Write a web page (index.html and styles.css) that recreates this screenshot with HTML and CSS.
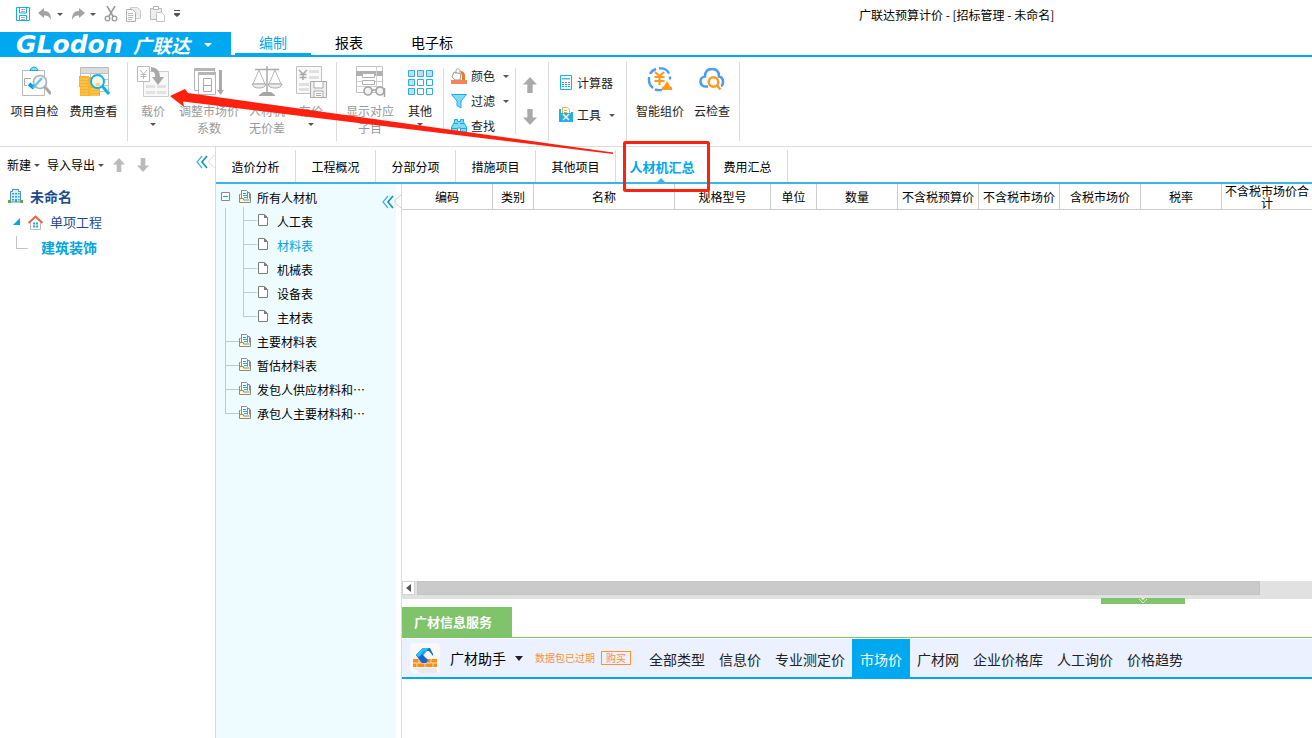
FILE: index.html
```html
<!DOCTYPE html>
<html lang="zh-CN">
<head>
<meta charset="utf-8">
<title>广联达预算计价</title>
<link rel="stylesheet" href="styles.css">
</head>
<body>
<svg class="defs" width="0" height="0" aria-hidden="true">
  <symbol id="docs" viewBox="0 0 12 13"><path d="M.5 12.500v-8h2v4h9v4z" fill="#fff8c8"/><path d="M2.500 8.500v-8h6v8z" fill="#fff"/><path d="M8.500 2.500h2v6h-2z" fill="#fff"/><path d="M2.500 8.500v-8h5l1 1v7M8.500 2.500h2v6M.5 4.500h1M.5 4.500v8h11v-9M.5 8.500h4v1.500h6" fill="none" stroke="#8a8a8a"/><path d="M4 3.500h3M4 5.500h4M5 7.500h3" stroke="#2fa8d8"/></symbol>
  <symbol id="page" viewBox="0 0 11 13"><path d="M.5.5h6l3 3v8H.5z" fill="#fff" stroke="#7c7c7c"/><path d="M6 0v4h4z" fill="#7c7c7c"/></symbol>
  <symbol id="up" viewBox="0 0 13 15"><path d="M6.500 0 13 7H9v8H4V7H0z" fill="currentColor"/></symbol>
  <symbol id="down" viewBox="0 0 13 15"><path d="M6.500 15 13 8H9V0H4v8H0z" fill="currentColor"/></symbol>
  <symbol id="chev" viewBox="0 0 12 14"><path d="M6 1 1 7l5 6" fill="none" stroke="#3db3d8" stroke-width="1.200"/><path d="M11 1 6 7l5 6" fill="none" stroke="#0a93bb" stroke-width="1.600"/></symbol>
</svg>

<header class="titlebar">
  <div class="quick">
    <button aria-label="保存"><svg width="14" height="14" viewBox="0 0 14 14"><path d="M.5.5h13v13H.5z" fill="#fff" stroke="#12b0e4"/><path d="M3.500 1v5h7V1M3.500 13V8.500h7V13" fill="none" stroke="#12b0e4"/><path d="M5 2.500h4M5 4.500h4M5 10.500h4M5 12.500h4" stroke="#aaa"/></svg></button>
    <button aria-label="撤销"><svg width="14" height="13" viewBox="0 0 14 13"><path d="M0 5 6 0v3c5 0 7 3 7 9C11 8.500 10 7.500 6 7.500V10z" fill="#a3a3a3"/></svg><i class="caret"></i></button>
    <button aria-label="重做"><svg width="14" height="13" viewBox="0 0 14 13"><path d="M14 5 8 0v3C3 3 1 6 1 12 3 8.500 4 7.500 8 7.500V10z" fill="#a3a3a3"/></svg><i class="caret"></i></button>
    <button aria-label="剪切"><svg width="14" height="16" viewBox="0 0 14 16"><path d="m3 0 6.500 11M11 0 4.500 11" stroke="#999" stroke-width="1.500" fill="none"/><circle cx="3.500" cy="12.500" r="2.300" fill="none" stroke="#999" stroke-width="1.300"/><circle cx="10.500" cy="12.500" r="2.300" fill="none" stroke="#999" stroke-width="1.300"/></svg></button>
    <button aria-label="复制"><svg width="16" height="15" viewBox="0 0 16 15"><path d="M4.500 2V.5h7l3 3v8H10" fill="#eee" stroke="#ccc"/><path d="M.5 2.500h6l3 3v9h-9z" fill="#fff" stroke="#b0b0b0"/><path d="M2 6.500h5M2 8.500h5M2 10.500h5M2 12.500h4" stroke="#bbb"/></svg></button>
    <button aria-label="粘贴"><svg width="16" height="16" viewBox="0 0 16 16"><path d="M.5 2.500h11v11H.5z" fill="#eee" stroke="#bbb"/><path d="M3.500.5h5v3h-5z" fill="#fff" stroke="#b0b0b0"/><path d="M6.500 6.500h5l3 3v6h-8z" fill="#fff" stroke="#c4c4c4"/></svg></button>
    <button aria-label="自定义"><svg width="6" height="8" viewBox="0 0 6 8"><path d="M0 0h6v1H0zM0 3h6v1.500L3 7 0 4.500z" fill="#555"/></svg></button>
  </div>
  <h1 class="title">广联达预算计价 - [招标管理 - 未命名]</h1>
</header>

<nav class="menubar">
  <button class="brand"><span class="word">GLodon</span><span class="cn">广联达</span><i class="caret light"></i></button>
  <button class="menu on">编制</button>
  <button class="menu">报表</button>
  <button class="menu">电子标</button>
</nav>

<section class="ribbon">
  <div class="group g1">
    <button class="tool"><svg width="32" height="32" viewBox="0 0 32 32"><path d="M3.500 4.500h22v25h-22z" fill="#fff" stroke="#bbb"/><path d="M11 4.500q1-3.500 4-3.500t4 3.500z" fill="#8edcf5" stroke="#12a9dc"/><path d="M12 12.500H5.500v7H8" fill="none" stroke="#aaa"/><circle cx="21" cy="16" r="6.500" fill="#f6fbfd" stroke="#b0b0b0" stroke-width="1.700"/><path d="m26 21 6 7" stroke="#a6a6a6" stroke-width="3"/><path d="m10 18 5 4" stroke="#05a0df" stroke-width="4"/><path d="m14 22 9-10" stroke="#56c3ec" stroke-width="2"/></svg>项目自检</button>
    <button class="tool"><svg width="32" height="32" viewBox="0 0 32 32"><path d="M2.500 1.500h28v24h-28z" fill="#fff" stroke="#bbb"/><path d="M3 2h27v5H3z" fill="#dcdcdc"/><path d="M3 7.500h27M3 13.500h27M3 19.500h27M12.500 8v17M21.500 8v17" stroke="#c0c0c0"/><path d="M1 10h10v20H2v-9H1zM11 11h11v19H11z" fill="#fbb32c"/><path d="M2 13h8M2 16h8M2 19h8M3 22h7M3 25h7M3 28h7M12 26h9M12 29h9M12 23h9" stroke="#ffcf68"/><circle cx="19.500" cy="15.500" r="6.500" fill="#fff7e2" stroke="#09b4ef" stroke-width="2"/><path d="M18 17h4v3h-4z" fill="#fcd48c"/><path d="m24 20 7 8" stroke="#09b4ef" stroke-width="3"/></svg>费用查看</button>
  </div>
  <div class="group g2">
    <button class="tool off w50"><svg width="32" height="32" viewBox="0 0 32 32"><path d="M6.500 5.500h25v25h-25z" fill="#f8f8f8" stroke="#ccc"/><path d="M9 19h9v3H9zM20 19h9v3h-9zM9 25h9v3H9zM20 25h9v3h-9z" fill="#e2e2e2"/><path d="M.5.500h12v15H.5z" fill="#fff" stroke="#bbb"/><path d="m3 4 3.500 4L10 4M6.500 8v5M3.500 8.500h6M3.500 10.500h6" fill="none" stroke="#bbb"/><path d="M14 1q9 1 9 10h4l-6 8-6-8h3q1-5-4-6z" fill="#a8a8a8"/></svg>载价<i class="caret"></i></button>
    <button class="tool off w62"><svg width="32" height="32" viewBox="0 0 32 32"><path d="M1.500 2.500h20v22h-20z" fill="#fff" stroke="#b6b6b6"/><path d="M1 2h21v3H1z" fill="#b6b6b6"/><path d="M5.500 6.500h17v22h-17z" fill="#fff" stroke="#b6b6b6"/><path d="M5 6h18v3H5z" fill="#b6b6b6"/><path d="M10.500 12.500h8v13h-8zM10 19.500h9" fill="#fff" stroke="#aaa"/><path d="M26 4h3v20h2l-3.500 5L24 24h2z" fill="#aaa"/></svg>调整市场价<br>系数</button>
    <button class="tool off w54"><svg width="32" height="32" viewBox="0 0 32 32"><path d="M4 3.500h24M16 0v27" stroke="#aaa" stroke-width="1.500"/><path d="M8 4 2 18h12zM24 4l-6 14h12z" fill="#fff" stroke="#b6b6b6"/><path d="M1 18h14q-1 4-7 4t-7-4zM17 18h14q-1 4-7 4t-7-4z" fill="#eee" stroke="#aaa"/><path d="M8 30v-1l4-3h8l4 3v1z" fill="#a6a6a6"/></svg>人材机<br>无价差</button>
    <button class="tool off w34"><svg width="32" height="32" viewBox="0 0 32 32"><path d="M1.500.500h25v27h-25z" fill="#fafafa" stroke="#c0c0c0"/><path d="M14 4h10v3H14zM14 10h10v3H14zM4 17h10v3H4zM4 22h10v3H4z" fill="#e0e0e0"/><path d="m4 4 4 4 4-4M8 8v6M4.500 8.500h7M4.500 11.500h7" fill="none" stroke="#aaa" stroke-width="1.500"/><path d="M15.500 15.500h16v16h-16z" fill="#eee" stroke="#aaa"/><path d="M19 16v6h9v-6M19 31v-6h9v6M21 27.500h5M21 29.500h5" fill="#fff" stroke="#aaa"/></svg>存价<i class="caret"></i></button>
  </div>
  <div class="group g3">
    <button class="tool off w66"><svg width="32" height="32" viewBox="0 0 32 32"><path d="M2.500.500h26v26h-26z" fill="#fff" stroke="#c0c0c0"/><path d="M2 5h27v5H2z" fill="#b0b0b0"/><path d="M3 15.500h25M3 20.500h25M22.500 0v26" stroke="#d0d0d0"/><path d="M8.500 7.500h12v4h-12zM8.500 14.500h12v4h-12z" fill="#fff" stroke="#b0b0b0"/><circle cx="14" cy="25" r="4" fill="#f2f2f2" stroke="#a4a4a4" stroke-width="1.700"/><circle cx="26" cy="25" r="4" fill="#f2f2f2" stroke="#a4a4a4" stroke-width="1.700"/><path d="M18 24h4M30.500 22v9" stroke="#a4a4a4" stroke-width="1.500"/></svg>显示对应<br>子目</button>
    <button class="tool w34"><svg width="32" height="32" viewBox="0 0 32 32"><g stroke="#27b0e4"><path fill="#c2ddef" d="M4.500 4.500h6v6h-6zM13.500 4.500h6v6h-6zM22.500 4.500h6v6h-6zM4.500 13.500h6v6h-6zM4.500 22.500h6v6h-6z"/><path fill="#fff" d="M13.500 13.500h6v6h-6zM22.500 13.500h6v6h-6zM13.500 22.500h6v6h-6zM22.500 22.500h6v6h-6z"/></g></svg>其他<i class="caret"></i></button>
  </div>
  <div class="group rows g4">
    <button class="row"><svg width="16" height="16" viewBox="0 0 16 16"><path d="m3 4 7 2-1 6H4L1 9z" fill="#fff" stroke="#999"/><path d="M5 6V2q2-3 4 0v4" fill="none" stroke="#aaa"/><path d="M9 3q5 0 5 5v4h-3V7z" fill="#e67c24"/><path d="M0 12h16v4H0z" fill="#f4845e"/></svg>颜色<i class="caret"></i></button>
    <button class="row"><svg width="16" height="16" viewBox="0 0 16 16"><path d="M.5 1.500h15L10 8v7l-4-2.500V8z" fill="#85d8f4" stroke="#1bb0e2"/></svg>过滤<i class="caret"></i></button>
    <button class="row"><svg width="16" height="16" viewBox="0 0 16 16"><path d="M3.500 4V1.500h3v2h3v-2h3V4l3 5v5h-6v-4h-3v4h-6V9z" fill="#85d8f4" stroke="#12aee0"/><path d="M3 5.500h4M9 5.500h4M1 10.500h5M10 10.500h5" stroke="#12aee0"/></svg>查找</button>
  </div>
  <div class="group arrows">
    <button aria-label="上移"><svg width="14" height="16"><use href="#up"/></svg></button>
    <button aria-label="下移"><svg width="14" height="16"><use href="#down"/></svg></button>
  </div>
  <div class="group rows g5">
    <button class="row"><svg width="14" height="16" viewBox="0 0 14 16"><path d="M1.500.500h11v14h-11z" fill="#fff" stroke="#16b0e4"/><path d="M3 3h8v1.500H3z" fill="#45bfe5"/><path d="M3 7.500h2M6 7.500h2M3 9.500h2M6 9.500h2M9 9.500h2M3 11.500h2M6 11.500h2M9 11.500h2" stroke="#16a8da"/><path d="M9 7.500h2" stroke="#f44"/></svg>计算器</button>
    <button class="row"><svg width="14" height="16" viewBox="0 0 14 16"><path d="M3.500.500h5l2 2V8h-7z" fill="#fff" stroke="#e6b84c"/><path d="M5 3.500h3M5 5.500h3" stroke="#f4a934"/><path d="M0 2h2v4h10V5h2v10H0z" fill="#23aee6"/><path d="m4 7 6 6M10 7l-6 6" stroke="#fff" stroke-width="1.500"/></svg>工具<i class="caret"></i></button>
  </div>
  <div class="group g6">
    <button class="tool w58"><svg width="26" height="32" viewBox="0 0 26 32"><path d="M9 3a10.500 10.500 0 0 0-6 5M2 11v3q0 5 4 8M12 2.500q7-1 10 5M23 10.500v3M8 23.500q3 1 7 .5" fill="none" stroke="#4a9cf5" stroke-width="2.400"/><path d="m8 6 4.500 4L17 6M12.500 9v10M7.500 11h10M7.500 15h10" stroke="#ff9a1f" stroke-width="2.200" fill="none"/><path d="M15 24q-1-3 2-4l3-5 3 5q3 1 2 4z" fill="#ff9a1f"/></svg>智能组价</button>
    <button class="tool w46"><svg width="26" height="32" viewBox="0 0 26 32"><path d="M9 20.500H7A5 5 0 0 1 6 10.500Q6 3 13 3t7 7.500q4 1 4 5t-2 4.500" fill="none" stroke="#4a9cf5" stroke-width="2.600"/><circle cx="14.500" cy="16" r="4.800" fill="#fff" stroke="#ff9a1f" stroke-width="2.500"/><path d="m18 19.500 3.500 4" stroke="#ff9a1f" stroke-width="2.600"/></svg>云检查</button>
  </div>
</section>

<main class="work">
  <aside class="project">
    <div class="bar">
      <button>新建<i class="caret"></i></button>
      <button>导入导出<i class="caret"></i></button>
      <button class="mv" aria-label="上移"><svg width="12" height="14"><use href="#up"/></svg></button>
      <button class="mv" aria-label="下移"><svg width="12" height="14"><use href="#down"/></svg></button>
      <button class="fold" aria-label="收起"><svg width="12" height="14"><use href="#chev"/></svg><svg width="7" height="16" viewBox="0 0 7 16"><path d="M7 1 1 6v3l6 5" fill="none" stroke="#ddd"/></svg></button>
    </div>
    <ul class="ptree">
      <li><button class="p1"><svg width="15" height="14" viewBox="0 0 15 14"><path d="M2.500 13V2.500h2v-2h6v2h2V13z" fill="#d5effa" stroke="#5b8fae"/><path d="M4 4h2v1.500H4zM7 4h2v1.500H7zM10 4h1.500v1.500H10zM4 7h2v1.500H4zM7 7h2v1.500H7zM10 7h1.500v1.500H10zM4 10h2v1.500H4zM7 10h2v3H7zM10 10h1.500v1.500H10z" fill="#2ba4de"/><path d="M0 11h3v3H0zM12 11h3v3h-3z" fill="#54ad4a"/></svg>未命名</button></li>
      <li><button class="p2"><svg width="8" height="8" viewBox="0 0 8 8"><path d="M7 0v7H0z" fill="#0ba4e8"/></svg><svg width="15" height="15" viewBox="0 0 15 15"><path d="M2.500 7v7.500h10V7L7.500 2z" fill="#fff" stroke="#bbb"/><path d="m.5 8 7-6.500 7 6.500" fill="none" stroke="#ef6548" stroke-width="2"/><path d="M5 7.500h2v2H5zM8 7.500h2v2H8zM5 10.500h2v2H5zM8 10.500h2v2H8z" fill="#25a7df"/></svg>单项工程</button></li>
      <li><button class="p3">建筑装饰</button></li>
    </ul>
  </aside>

  <section class="content">
    <nav class="tabs">
      <button>造价分析</button><button>工程概况</button><button>分部分项</button><button>措施项目</button><button>其他项目</button><button class="on">人材机汇总</button><button>费用汇总</button>
    </nav>
    <div class="split">
      <aside class="kinds">
        <button class="fold" aria-label="收起"><svg width="12" height="14"><use href="#chev"/></svg><svg width="7" height="16" viewBox="0 0 7 16"><path d="M7 1 1 6v3l6 5" fill="none" stroke="#ccc"/></svg></button>
        <ul class="tree">
          <li class="root"><button><svg class="exp" width="9" height="9" viewBox="0 0 9 9"><path d="M.5.500h8v8h-8z" fill="#fff" stroke="#888"/><path d="M2 4.500h5" stroke="#1aa5da"/></svg><svg width="12" height="13"><use href="#docs"/></svg>所有人材机</button>
            <ul>
              <li><button><svg width="11" height="13"><use href="#page"/></svg>人工表</button></li>
              <li><button class="on"><svg width="11" height="13"><use href="#page"/></svg>材料表</button></li>
              <li><button><svg width="11" height="13"><use href="#page"/></svg>机械表</button></li>
              <li><button><svg width="11" height="13"><use href="#page"/></svg>设备表</button></li>
              <li><button><svg width="11" height="13"><use href="#page"/></svg>主材表</button></li>
            </ul>
          </li>
          <li><button><svg width="12" height="13"><use href="#docs"/></svg>主要材料表</button></li>
          <li><button><svg width="12" height="13"><use href="#docs"/></svg>暂估材料表</button></li>
          <li><button><svg width="12" height="13"><use href="#docs"/></svg>发包人供应材料和…</button></li>
          <li><button><svg width="12" height="13"><use href="#docs"/></svg>承包人主要材料和…</button></li>
        </ul>
      </aside>
      <div class="sheet">
        <div class="gridwrap">
          <table>
            <colgroup><col class="c91"><col class="c41"><col class="c141"><col class="c96"><col class="c46"><col class="c81"><col class="c81"><col class="c81"><col class="c81"><col class="c81"><col></colgroup>
            <thead><tr><th>编码</th><th>类别</th><th>名称</th><th>规格型号</th><th>单位</th><th>数量</th><th>不含税预算价</th><th>不含税市场价</th><th>含税市场价</th><th>税率</th><th>不含税市场价合计</th></tr></thead>
          </table>
        </div>
        <div class="scroll"><button aria-label="向左滚动"><svg width="5" height="8" viewBox="0 0 5 8"><path d="M5 0v8L0 4z" fill="#555"/></svg></button><div class="thumb"></div>
          <button class="grip" aria-label="收起面板"><svg width="10" height="6" viewBox="0 0 10 6"><path d="M3 0h4L5 2z" fill="#fff"/><path d="m1 1 4 4 4-4" fill="none" stroke="#d6f2cc"/></svg></button>
        </div>
        <section class="service">
          <div class="shead"><button>广材信息服务</button></div>
          <nav class="sbar">
            <svg class="slogo" width="30" height="30" viewBox="0 0 30 30"><rect width="30" height="30" rx="4" fill="#f8f8fa"/><path d="M4 25h23v5H10z" fill="#e8eaf0"/><path d="M3 16h24v8H3z" fill="#ff8c1a"/><path d="M3 20h24M9 16v4M21 16v4M7 20v4M15 20v4M23 20v4" stroke="#ffe0b8"/><path d="M6 12 13 5h7l-4 4-3 4 5 4-2 3h-4z" fill="#22aaf4"/><path d="m12 11 3-3h4l4 5v-2l-3-6h-7l-7 7 6 8h4l2-3z" fill="#1268d8"/><path d="m6 12 7-7h6l-3 3h-2l-3 4-2 2z" fill="#28c0f8"/></svg>
            <button class="helper">广材助手<i class="caret big"></i></button>
            <span class="expired">数据包已过期</span><button class="buy">购买</button>
            <div class="links"><button>全部类型</button><button>信息价</button><button>专业测定价</button><button class="on">市场价</button><button>广材网</button><button>企业价格库</button><button>人工询价</button><button>价格趋势</button></div>
          </nav>
          <div class="sbody"></div>
        </section>
      </div>
    </div>
  </section>
</main>

<svg class="mark" width="560" height="130" viewBox="160 80 560 130" aria-hidden="true"><path d="M170 96 185 89 188 93 613 152.500V154L183 101.500 184 107z" fill="#ff2010"/><rect x="624.500" y="142.500" width="84" height="48" rx="1" fill="none" stroke="#ff2010" stroke-width="3"/></svg>
</body>
</html>
```
FILE: styles.css
```css
* { box-sizing: border-box; }
body {
  margin: 0;
  position: relative;
  display: flex;
  flex-direction: column;
  height: 100vh;
  overflow: hidden;
  background: #fff;
  color: #000;
  font: 12px/16px "Noto Sans CJK SC", sans-serif;
}
button {
  margin: 0;
  padding: 0;
  border: 0;
  background: none;
  color: inherit;
  font: inherit;
  white-space: nowrap;
}
svg { display: block; flex: none; }
ul { list-style: none; margin: 0; padding: 0; }
.defs { position: absolute; }
.caret {
  flex: none;
  border: 3px solid transparent;
  border-top-color: #555;
  border-bottom: 0;
}
.caret.light { border-width: 4px 4px 0; border-top-color: #fff; }
.caret.big { border-width: 5px 5px 0; border-top-color: #222; }

.titlebar { display: flex; align-items: center; height: 32px; flex: none; padding-bottom: 2px; }
.quick { display: flex; align-items: center; width: 859px; height: 26px; padding: 0 0 2px 16px; gap: 8px; }
.quick button { display: flex; align-items: center; gap: 5px; }
.title { margin: 0; font-size: 12px; font-weight: 400; line-height: 16px; }

.menubar { display: flex; flex: none; height: 25px; border-bottom: 2px solid #00a8f0; }
.brand {
  display: flex;
  align-items: center;
  width: 231px;
  height: 25px;
  margin-right: 4px;
  padding-left: 16px;
  background: #00a8f0;
  color: #fff;
}
.word { width: 117px; text-align: left; font: italic bold 25px/24px "DejaVu Sans", sans-serif; }
.cn { margin-right: 14px; font-size: 19px; font-weight: 700; font-style: italic; line-height: 24px; }
.menu { width: 76px; height: 23px; padding-bottom: 1px; border-bottom: 2px solid transparent; font-size: 14px; line-height: 20px; }
.menu:last-child { width: 90px; }
.menu.on { color: #00a8f0; border-bottom-color: #00a8f0; }

.ribbon { display: flex; flex: none; height: 90px; padding-top: 5px; border-bottom: 1px solid #dcdcdc; color: #222; }
.group { display: flex; flex: none; height: 79px; padding-top: 4px; border-right: 1px solid #dcdcdc; }
.g1 { width: 128px; padding-left: 5px; }
.g2 { width: 209px; }
.g3 { width: 106px; }
.g3, .g4 { border-color: transparent; }
.g4, .arrows { margin-top: 6px; height: 66px; padding-top: 0; }
.tool { display: flex; flex-direction: column; align-items: center; width: 59px; height: 72px; line-height: 17px; }
.tool svg { height: 32px; margin-bottom: 4px; }
.tool .caret { margin-top: 4px; }
.off { color: #999; }
.w34 { width: 34px; }
.w46 { width: 46px; }
.w50 { width: 50px; }
.w54 { width: 54px; }
.w58 { width: 58px; }
.w62 { width: 62px; }
.w66 { width: 66px; }
.rows { flex-direction: column; }
.row { display: flex; align-items: center; }
.g4 { width: 72px; padding-left: 7px; gap: 9px; border-left: 1px solid #dcdcdc; }
.g4 .row { gap: 4px; }
.g4 .row .caret { margin-left: 4px; }
.arrows { width: 33px; padding-right: 4px; flex-direction: column; align-items: center; justify-content: center; gap: 16px; color: #aaa; border-left: 1px solid #dcdcdc; border-right-color: transparent; }
.g5 { width: 79px; padding: 13px 0 0 10px; gap: 16px; border-left: 1px solid #dcdcdc; }
.g5 .row { gap: 4px; }
.g5 .row .caret { margin-left: 4px; }
.g6 { width: 113px; padding-left: 4px; }

.work { display: flex; flex: 1; min-height: 0; }
.project { width: 216px; flex: none; border-right: 1px solid #dcdcdc; }
.bar { display: flex; align-items: center; height: 36px; padding-left: 7px; gap: 7px; }
.bar button { display: flex; align-items: center; gap: 3px; }
.bar .mv { color: #bbb; margin-left: 2px; margin-right: 3px; }
.bar .fold { margin-left: auto; gap: 0; height: 30px; align-self: flex-start; }
.ptree { padding-top: 1px; color: #1d4b8b; }
.ptree button { display: flex; align-items: center; height: 24px; }
.p1 { padding-left: 8px; gap: 7px; font-size: 14px; font-weight: 700; }
.ptree .p2 { padding-left: 13px; gap: 7px; height: 28px; font-size: 13px; }
.ptree .p3 { position: relative; height: 22px; padding-left: 41px; font-size: 14px; font-weight: 700; color: #00a5dc; }
.p3::before {
  content: "";
  position: absolute;
  left: 16px;
  top: 0;
  width: 11px;
  height: 12px;
  border: 1px solid #c4c4c4;
  border-width: 0 0 1px 1px;
}

.content { display: flex; flex-direction: column; flex: 1; min-width: 0; }
.tabs { display: flex; flex: none; height: 37px; padding-top: 3px; border-bottom: 2px solid #3cb4e4; }
.tabs button { width: 80px; padding-top: 2px; border-right: 1px solid #dcdcdc; }
.tabs .on { position: relative; width: 92px; border: 0; color: #00a8f0; font-size: 13px; font-weight: 700; }
.tabs .on::after {
  content: "";
  position: absolute;
  left: 41px;
  bottom: 0;
  border: 4px solid transparent;
  border-top: 0;
  border-bottom-color: #3cb4e4;
}
.split { display: flex; flex: 1; min-height: 0; }
.kinds { position: relative; flex: none; width: 186px; padding-top: 2px; border-right: 1px solid #dcdcdc; background: linear-gradient(90deg, #effcff 180px, #fff 180px); }
.kinds .fold { position: absolute; right: 0; top: 10px; display: flex; align-items: center; }
.tree button { display: flex; align-items: center; height: 24px; gap: 6px; }
.tree > li { position: relative; padding-left: 23px; }
.tree .root { padding-left: 5px; }
.tree .exp { margin: -3px 3px 0 0; }
.root > button > svg:nth-child(2) { margin-top: -4px; }
.tree li:not(.root) > button > svg { margin-top: -4px; }
.tree > li:not(.root)::before {
  content: "";
  position: absolute;
  left: 9px;
  bottom: 12px;
  width: 13px;
  height: 24px;
  border: 1px solid #c4cacc;
  border-width: 0 0 1px 1px;
}
.tree > .root::before {
  content: "";
  position: absolute;
  left: 9px;
  top: 22px;
  bottom: 0;
  border-left: 1px solid #c4cacc;
}
.root ul { padding-left: 37px; }
.root ul li { position: relative; }
.root ul button { gap: 8px; }
.root ul li::before {
  content: "";
  position: absolute;
  left: -15px;
  bottom: 13px;
  width: 13px;
  height: 24px;
  border: 1px solid #c4cacc;
  border-width: 0 0 1px 1px;
}
.root ul li:first-child::before { height: 13px; }
.tree .on { color: #00a5dc; }

.sheet { display: flex; flex-direction: column; flex: 1; min-width: 0; }
.gridwrap { flex: 1; min-height: 0; }
table { width: 100%; table-layout: fixed; border-collapse: separate; border-spacing: 0; }
th {
  height: 26px;
  padding: 0;
  border-right: 1px solid #ccc;
  border-bottom: 1px solid #ccc;
  font-weight: 400;
  line-height: 12px;
}
th:last-child { border-right: 0; }
.c41 { width: 41px; }
.c46 { width: 46px; }
.c81 { width: 81px; }
.c91 { width: 91px; }
.c96 { width: 96px; }
.c141 { width: 141px; }

.scroll { position: relative; display: flex; flex: none; height: 18px; padding-right: 52px; gap: 2px; background: #e1e1e1; }
.scroll > button:first-child { display: grid; place-items: center; width: 13px; height: 14px; border: 1px solid #d4d4d4; background: #fff; }
.thumb { flex: 1; height: 14px; border: 1px solid #c4c4c4; background: #cacaca; }
.scroll .grip { position: absolute; right: 127px; bottom: -5px; width: 84px; height: 6px; display: grid; place-items: center; background: #7fc36a; }
.service { flex: none; padding-top: 8px; }
.shead { display: flex; border-bottom: 1px solid #7fc36a; }
.shead button { width: 110px; height: 30px; padding: 0 8px 0 0; background: #7fc36a; color: #fff; font-size: 13px; font-weight: 700; }
.sbar { display: flex; align-items: center; height: 41px; padding-left: 8px; border-top: 1px solid #fff; border-bottom: 2px solid #00a8f0; background: #ebf1ff; }
.helper { display: flex; align-items: center; gap: 9px; margin: 0 12px 0 10px; font-size: 14px; }
.caret.big { border-width: 5px 4px 0; }
.expired { font-size: 10px; color: #ff9030; }
.buy { width: 30px; height: 14px; margin: 0 11px 0 6px; border: 1px solid #ff9030; color: #ff9030; font-size: 10px; line-height: 12px; }
.links { display: flex; align-self: stretch; font-size: 14px; }
.links button { padding: 2px 7px 0; color: #222; }
.links .on { padding: 2px 8px 0; background: #00a8f0; color: #fff; }
.sbody { height: 59px; }
.mark { position: absolute; left: 160px; top: 80px; pointer-events: none; }
```
